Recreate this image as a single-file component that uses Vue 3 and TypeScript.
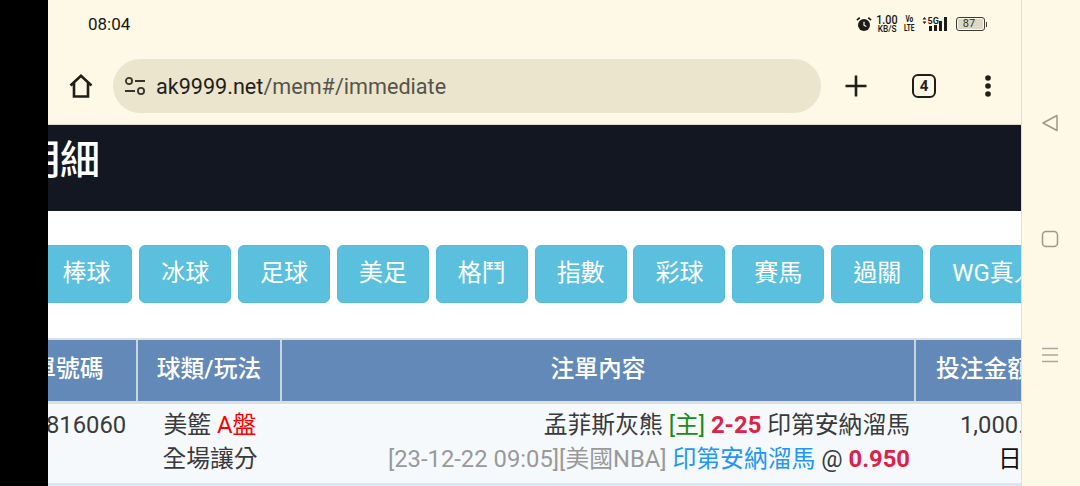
<script setup lang="ts">
const tabs: string[] = ['棒球', '冰球', '足球', '美足', '格鬥', '指數', '彩球', '賽馬', '過關', 'WG真人']
</script>

<template>
  <div class="screen">
    <div class="cutout"></div>
    <main class="phone">
      <div class="status">
        <span class="time">08:04</span>
        <div class="indicators">
          <svg class="alarm" width="16" height="16" viewBox="0 0 17 16">
            <circle cx="8.5" cy="9" r="6.4" fill="#1c1b17" />
            <path d="M8.5 5.5V9.3L11 10.6" fill="none" stroke="#fdf8e6" stroke-width="1.3" />
            <path d="M1 4L4 1.2M16 4L13 1.2" stroke="#1c1b17" stroke-width="1.8" />
          </svg>
          <div class="speed"><b>1.00</b><small>KB/S</small></div>
          <div class="volte"><span>Vo</span><span>LTE</span></div>
          <svg width="27" height="16" viewBox="0 0 27 16">
            <path d="M0.5 3.5L2.5 1L4.5 3.5ZM0.5 5.5L2.5 8L4.5 5.5Z" fill="#1c1b17" />
            <text x="5.5" y="8" font-size="9" font-weight="700" font-family="Roboto, sans-serif" fill="#1c1b17">5G</text>
            <rect x="7" y="10" width="3" height="5" fill="#1c1b17" />
            <rect x="12" y="9" width="3" height="6" fill="#1c1b17" />
            <rect x="17" y="5" width="3" height="10" fill="#1c1b17" />
            <rect x="22" y="1" width="3" height="14" fill="#1c1b17" />
          </svg>
          <div class="battery"><div class="cell"><span>87</span></div><i></i></div>
        </div>
      </div>

      <div class="toolbar">
        <svg class="home" width="26" height="26" viewBox="0 0 26 26">
          <path d="M2.5 12.5L13 2.8L23.5 12.5M6 10V23.5H20V10" fill="none" stroke="#1f1f1a" stroke-width="2.6" stroke-linejoin="miter" />
        </svg>
        <div class="omnibox">
          <svg width="22" height="18" viewBox="0 0 22 18">
            <circle cx="5" cy="4" r="3.1" fill="none" stroke="#35342b" stroke-width="1.8" />
            <path d="M11 4H21M1 14H11" stroke="#35342b" stroke-width="1.8" />
            <circle cx="17" cy="14" r="3.1" fill="none" stroke="#35342b" stroke-width="1.8" />
          </svg>
          <span class="url"><em>ak9999.net</em>/mem#/immediate</span>
        </div>
        <svg class="plus" width="24" height="24" viewBox="0 0 24 24">
          <path d="M12 1.5V22.5M1.5 12H22.5" stroke="#1f1f1a" stroke-width="2.6" />
        </svg>
        <div class="tabcount">4</div>
        <svg class="more" width="8" height="24" viewBox="0 0 8 24">
          <circle cx="4" cy="4" r="2.8" fill="#1f1f1a" />
          <circle cx="4" cy="12" r="2.8" fill="#1f1f1a" />
          <circle cx="4" cy="20" r="2.8" fill="#1f1f1a" />
        </svg>
      </div>

      <header class="page-title"><h1>明細</h1></header>

      <nav class="tabs">
        <button v-for="tab in tabs" :key="tab" type="button">{{ tab }}</button>
      </nav>

      <section class="table">
        <div class="row head">
          <div class="c1">注單號碼</div>
          <div class="c2">球類/玩法</div>
          <div class="c3">注單內容</div>
          <div class="c4">投注金額</div>
        </div>
        <div class="row body">
          <div class="c1 num">816060</div>
          <div class="c2 type">
            <div>美籃 <span class="red">A盤</span></div>
            <div>全場讓分</div>
          </div>
          <div class="c3 detail">
            <div>孟菲斯灰熊 <span class="green">[主]</span> <b>2-25</b> 印第安納溜馬</div>
            <div><span class="grey">[23-12-22 09:05][美國NBA]</span> <span class="blue">印第安納溜馬</span> @ <b>0.950</b></div>
          </div>
          <div class="c4 amount">
            <div>1,000.00</div>
            <div class="day">日</div>
          </div>
        </div>
        <div class="row-sep"></div>
      </section>
    </main>
    <aside class="nav">
      <svg width="18" height="18" viewBox="0 0 18 18">
        <path d="M16 1.5V16.5L2 9Z" fill="none" stroke="#9b998e" stroke-width="1.5" stroke-linejoin="round" />
      </svg>
      <svg width="18" height="18" viewBox="0 0 18 18">
        <rect x="1.5" y="1.5" width="15" height="15" rx="3.5" fill="none" stroke="#9b998e" stroke-width="1.5" />
      </svg>
      <svg width="18" height="18" viewBox="0 0 18 18">
        <path d="M1 2.5H17M1 9H17M1 15.5H17" stroke="#aaa89c" stroke-width="1.5" />
      </svg>
    </aside>
  </div>
</template>

<style>
html, body { margin: 0; background: #000; }
</style>

<style scoped>
.screen {
  width: 1080px;
  height: 486px;
  display: flex;
  overflow: hidden;
  font-family: Roboto, "Noto Sans CJK TC", sans-serif;
}
.cutout { width: 48px; flex: none; background: #000; }
.phone {
  width: 973px;
  flex: none;
  display: flex;
  flex-direction: column;
  overflow: hidden;
  background: #fff;
}
.status {
  height: 49px;
  flex: none;
  box-sizing: border-box;
  padding: 0 34px 1px 40px;
  display: flex;
  align-items: center;
  justify-content: space-between;
  background: #fef8e6;
  color: #17170f;
}
.time { font-size: 17px; line-height: 20px; }
.indicators { display: flex; align-items: center; gap: 7px; }
.alarm { margin-right: -2px; }
.speed { display: flex; flex-direction: column; align-items: center; width: 21px; }
.speed b { font-size: 12px; font-weight: 500; line-height: 10px; transform: scaleX(0.9); }
.speed small { font-size: 9px; font-weight: 500; line-height: 9px; transform: scaleX(0.92); }
.volte { display: flex; flex-direction: column; align-items: center; width: 10px; font-size: 9px; font-weight: 700; line-height: 9px; }
.volte span { transform: scaleX(0.72); white-space: nowrap; }
.battery { display: flex; align-items: center; gap: 1px; }
.cell {
  width: 29px;
  height: 14px;
  box-sizing: border-box;
  border: 1px solid #3e3d34;
  border-radius: 3px;
  padding: 1px;
  display: flex;
}
.cell span {
  flex: 1;
  background: #dcd9c8;
  font-size: 11px;
  line-height: 10px;
  text-align: center;
  border-radius: 1px;
  padding-right: 2px;
  color: #33322a;
}
.battery i { width: 1.5px; height: 5px; background: #3e3d34; }

.toolbar {
  height: 76px;
  flex: none;
  box-sizing: border-box;
  padding-bottom: 1px;
  display: flex;
  align-items: center;
  background: #fef8e6;
  border-bottom: 1px solid #ddd9c9;
}
.home { margin-left: 20px; flex: none; }
.omnibox {
  width: 708px;
  height: 54px;
  margin-left: 19px;
  box-sizing: border-box;
  padding-left: 11px;
  border-radius: 27px;
  background: #ebe5ce;
  display: flex;
  align-items: center;
  gap: 10px;
  flex: none;
}
.url { font-size: 21.6px; color: #55544a; }
.url em { font-style: normal; color: #1f1f1a; }
.plus { margin-left: 23px; flex: none; }
.tabcount {
  margin-left: 44px;
  width: 24px;
  height: 24px;
  box-sizing: border-box;
  border: 2.5px solid #1f1f1a;
  border-radius: 6px;
  display: flex;
  align-items: center;
  justify-content: center;
  font-size: 15px;
  font-weight: 700;
  color: #1f1f1a;
  flex: none;
}
.more { margin-left: 48px; flex: none; }

.page-title {
  height: 86px;
  flex: none;
  background: #131722;
  display: flex;
  align-items: center;
}
.page-title h1 {
  margin: -14px 0 0 -28px;
  font-size: 40px;
  font-weight: 500;
  color: #fff;
  line-height: 48px;
}

.tabs {
  height: 127px;
  flex: none;
  box-sizing: border-box;
  padding-top: 34px;
  margin-left: -7.6px;
  display: flex;
  gap: 6.85px;
  align-items: flex-start;
}
.tabs button {
  width: 92px;
  height: 58px;
  flex: none;
  box-sizing: border-box;
  padding: 0 0 2px;
  white-space: nowrap;
  overflow: hidden;
  border: 1px solid #55bbdb;
  border-radius: 6px;
  background: #5bc0de;
  color: #fff;
  font-family: inherit;
  font-size: 24px;
  line-height: 54px;
}
.tabs button:last-child { width: 130px; margin-right: -40px; }

.table { flex: 1; display: flex; flex-direction: column; background: #fff; }
.row { display: flex; flex: none; }
.head {
  height: 66px;
  box-sizing: border-box;
  background: #6289b8;
  color: #fff;
  font-size: 23.8px;
  font-weight: 500;
  border-top: 2px solid #dedede;
  border-bottom: 3px solid #dedede;
  white-space: nowrap;
  align-items: stretch;
}
.head > div { display: flex; align-items: center; justify-content: center; box-sizing: border-box; padding-bottom: 8px; }
.head .c1, .head .c2, .head .c3 { border-right: 2px solid #c8d4e2; }
.c1 { width: 162px; margin-left: -72px; flex: none; }
.c2 { width: 144px; flex: none; }
.c3 { width: 634px; flex: none; }
.c4 { width: 135px; flex: none; }
.body {
  height: 79px;
  box-sizing: border-box;
  background: #f5f9fc;
  color: #3a3a3a;
  font-size: 23.8px;
  line-height: 34.4px;
  padding-top: 4px;
  white-space: nowrap;
}
.num { padding-left: 70px; box-sizing: border-box; }
.type { text-align: center; box-sizing: border-box; }
.red { color: #f00; }
.detail { text-align: right; box-sizing: border-box; padding-right: 6px; }
.green { color: #1a8a1a; }
.detail b { color: #dc2249; font-weight: 700; }
.grey { color: #999; }
.blue { color: #2196f3; }
.amount { text-align: left; box-sizing: border-box; }
.amount > div:first-child { margin-left: 44px; }
.day { color: #111; margin-left: 82px; }
.row-sep { flex: 1; background: #dbe8f1; }

.nav {
  width: 59px;
  flex: none;
  box-sizing: border-box;
  background: #fef8e6;
  border-left: 1px solid #e3dfcf;
  display: flex;
  flex-direction: column;
  align-items: center;
  padding-top: 114px;
  padding-right: 2px;
  gap: 98px;
}
</style>
